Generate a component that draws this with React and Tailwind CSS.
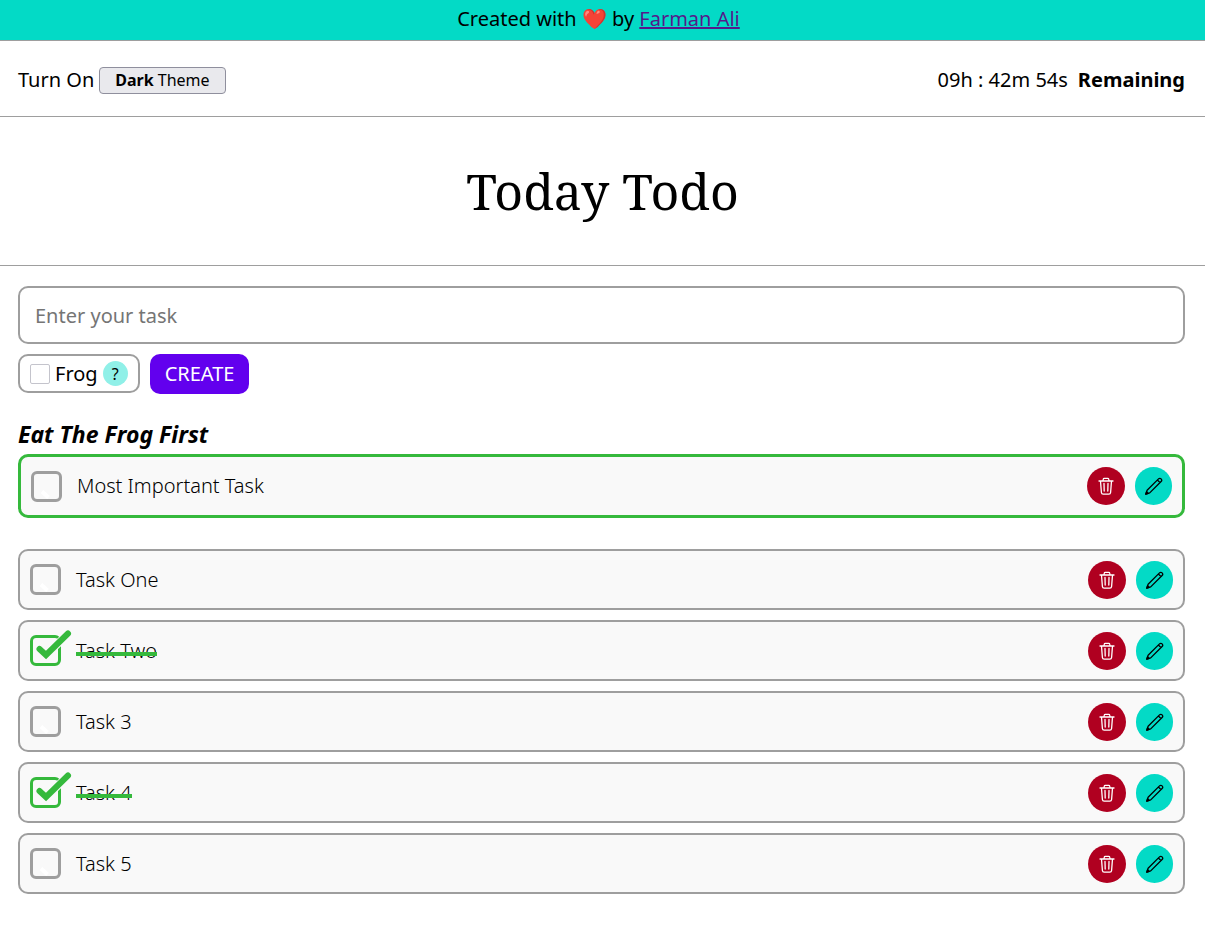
import { useState } from "react";

const FROG_TASKS = [{ id: "frog", title: "Most Important Task", done: false, frog: true }];
const TASKS = [
  { id: "t1", title: "Task One", done: false },
  { id: "t2", title: "Task Two", done: true },
  { id: "t3", title: "Task 3", done: false },
  { id: "t4", title: "Task 4", done: true },
  { id: "t5", title: "Task 5", done: false },
];

function TrashIcon() {
  return (
    <svg viewBox="0 0 18 18" className="size-[18px]" fill="none" stroke="currentColor" strokeWidth="1.3" strokeLinecap="round" strokeLinejoin="round" aria-hidden="true">
      <path d="M2 4h14M5.800 4l.5-1.800a1 1 0 0 1 1-.8h3.400a1 1 0 0 1 1 .8l.5 1.800M3.500 4l.9 11.500a1.800 1.800 0 0 0 1.800 1.600h5.600a1.800 1.800 0 0 0 1.800-1.600L14.500 4M7 6.500l.2 7.500M11 6.500l-.2 7.500" />
    </svg>
  );
}

function PencilIcon() {
  return (
    <svg viewBox="0 0 18 18" className="size-[18px]" fill="none" stroke="currentColor" strokeWidth="1.3" strokeLinejoin="round" aria-hidden="true">
      <path d="M.8 17.200l1.300-3.900L13.500 1.900a1.800 1.800 0 0 1 2.600 2.600L4.700 15.900zM12.400 3l2.600 2.600" />
      <path d="M.8 17.200l.8-2.400 1.600 1.600z" fill="currentColor" />
    </svg>
  );
}

function TaskCheckbox({ id, done, onChange }) {
  return (
    <span className="relative flex size-[31px] shrink-0">
      <input
        id={id}
        type="checkbox"
        checked={done}
        onChange={onChange}
        className="size-[31px] appearance-none rounded-md border-3 border-[#9e9e9e] checked:border-[#35b93c]"
      />
      <svg
        viewBox="0 0 44 40"
        className="pointer-events-none absolute -top-[6px] left-0 h-[40px] w-[44px]"
        fill="none"
        strokeLinecap="round"
        strokeLinejoin="miter"
        aria-hidden="true"
      >
        {done ? (
          <>
            <path d="M10 20l6 6L38 5" stroke="#f9f9f9" strokeWidth="8" />
            <path d="M9.500 20l6.500 6L38 4.500" stroke="#35b93c" strokeWidth="6" />
          </>
        ) : (
          <path d="M11 26.500l6.500 6" stroke="#ffffff" strokeWidth="4" strokeLinecap="butt" />
        )}
      </svg>
    </span>
  );
}

function TaskRow({ task, onToggle }) {
  const frame = task.frog ? "min-h-16 border-3 border-[#35b93c]" : "min-h-[61px] border-2 border-[#9e9e9e]";
  const strike = task.done
    ? "after:absolute after:inset-x-0 after:top-[13px] after:h-1 after:bg-[#35b93c] after:content-['']"
    : "";
  return (
    <li className={`flex items-center justify-between rounded-[10px] bg-[#f9f9f9] px-2.5 ${frame}`}>
      <div className="flex items-center gap-[15px]">
        <TaskCheckbox id={task.id} done={task.done} onChange={onToggle} />
        <label htmlFor={task.id} className={`relative text-xl leading-6 font-light text-black ${strike}`}>
          {task.title}
        </label>
      </div>
      <div className="flex items-center gap-2.5">
        <button type="button" aria-label={`Delete ${task.title}`} className="flex size-[38px] items-center justify-center rounded-full bg-[#b00020] text-white">
          <TrashIcon />
        </button>
        <button type="button" aria-label={`Edit ${task.title}`} className="flex h-[38px] w-[37px] items-center justify-center rounded-full bg-[#03dac6] text-black">
          <PencilIcon />
        </button>
      </div>
    </li>
  );
}

export default function App() {
  const [frogs, setFrogs] = useState(FROG_TASKS);
  const [tasks, setTasks] = useState(TASKS);
  const toggle = (setter, id) => () =>
    setter((list) => list.map((t) => (t.id === id ? { ...t, done: !t.done } : t)));

  return (
    <div className="min-h-screen bg-white font-['Noto_Sans',sans-serif] text-xl leading-7 text-black">
      <p className="border-b border-[#9e9e9e] bg-[#03dac6] pt-[5px] pb-[7px] pr-2 text-center">
        Created with <span className="font-['Noto_Color_Emoji',sans-serif]">❤️</span> by{" "}
        <a href="#author" className="text-[#551a8b] underline">Farman Ali</a>
      </p>

      <div className="flex items-center justify-between border-b border-[#9e9e9e] pt-[25px] pr-5 pb-[22px] pl-[18px]">
        <div className="flex items-center gap-[5px]">
          <span>Turn On</span>
          <button type="button" className="h-[27px] rounded border border-[#8f8f9d] bg-[#e9e9ed] px-[15px] text-base leading-6">
            <b>Dark</b> Theme
          </button>
        </div>
        <p className="flex gap-2.5">
          <span>09h : 42m 54s</span>
          <b>Remaining</b>
        </p>
      </div>

      <header className="border-b border-[#9e9e9e] py-10 text-center">
        <h1 className="font-['Noto_Serif','DejaVu_Serif',serif] text-[50px] leading-[68px]">Today Todo</h1>
      </header>

      <main className="pt-5 pr-5 pb-8 pl-[18px]">
        <form onSubmit={(e) => e.preventDefault()}>
          <input
            type="text"
            aria-label="Task"
            placeholder="Enter your task"
            className="block h-[58px] w-full rounded-[10px] border-2 border-[#9e9e9e] px-[15px] placeholder:text-[#757575]"
          />
          <div className="mt-2.5 flex items-start gap-2.5">
            <div className="flex h-[39px] items-center rounded-[10px] border-2 border-[#9e9e9e] px-2.5">
              <input id="is-frog" type="checkbox" className="size-5 appearance-none rounded-xs border border-[#c4c4cc] bg-white checked:bg-[#6200ee]" />
              <label htmlFor="is-frog" className="ml-[5px]">Frog</label>
              <button type="button" aria-label="What is a frog?" className="ml-[5px] flex size-[25px] items-center justify-center rounded-full bg-[#90f0e8] text-base">
                ?
              </button>
            </div>
            <button type="submit" className="h-10 rounded-[10px] bg-[#6200ee] px-[15px] text-white">CREATE</button>
          </div>
        </form>

        <section className="mt-[25px]">
          <h2 className="text-[23px] leading-[30px] font-bold italic">Eat The Frog First</h2>
          <ul className="mt-[5px] flex flex-col gap-2.5">
            {frogs.map((t) => <TaskRow key={t.id} task={t} onToggle={toggle(setFrogs, t.id)} />)}
          </ul>
        </section>

        <ul className="mt-[31px] flex flex-col gap-2.5">
          {tasks.map((t) => <TaskRow key={t.id} task={t} onToggle={toggle(setTasks, t.id)} />)}
        </ul>
      </main>
    </div>
  );
}
